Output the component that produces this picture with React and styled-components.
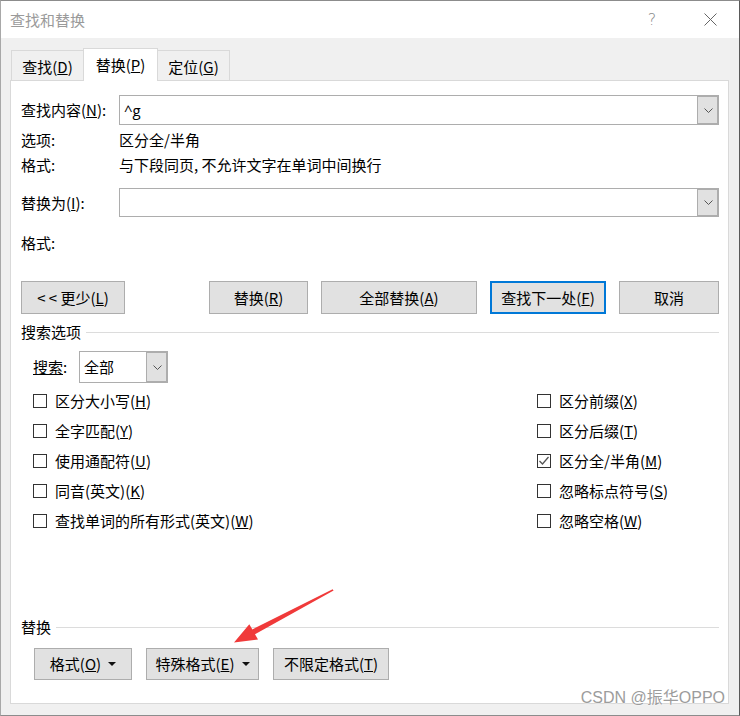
import React from "react";
import styled, { createGlobalStyle } from "styled-components";

const Global = createGlobalStyle`
  html, body { margin: 0; padding: 0; background: #fff; }
  body {
    font-family: "Noto Sans CJK SC", "Microsoft YaHei", "Noto Sans", sans-serif;
    font-size: 15px;
    color: #000;
  }
  * { box-sizing: border-box; }
`;

const Window = styled.div`
  position: relative;
  width: 740px;
  height: 716px;
  border: 1px solid #8c8c8c;
  border-left-color: #a8a8a8;
  border-right-color: #5a5a5a;
  background: #f0f0f0;
  display: flex;
  flex-direction: column;
`;

const TitleBar = styled.div`
  height: 37px;
  flex: none;
  background: #fff;
  display: flex;
  align-items: center;
`;

const Title = styled.div`
  padding-left: 9px;
  color: #9a9a9a;
  font-size: 15px;
  line-height: 20px;
`;

const TitleButton = styled.div`
  width: 58px;
  height: 37px;
  display: flex;
  align-items: center;
  justify-content: center;
  color: #8a8a8a;
  font-family: "DejaVu Sans", sans-serif;
  font-weight: 300;
  font-size: 16px;
`;

const HelpButton = styled(TitleButton)`
  margin-left: auto;
`;

const Body = styled.div`
  flex: 1;
  display: flex;
  flex-direction: column;
  padding: 10px 10px 11px 9px;
`;

const Tabs = styled.div`
  height: 32px;
  flex: none;
  display: flex;
  align-items: flex-end;
  padding-left: 1px;
`;

const Tab = styled.div`
  position: relative;
  z-index: 1;
  width: ${(p) => p.$w}px;
  height: ${(p) => (p.$active ? 33 : 30)}px;
  margin-bottom: ${(p) => (p.$active ? -1 : 0)}px;
  background: ${(p) => (p.$active ? "#fff" : "#f0f0f0")};
  border: 1px solid #d9d9d9;
  border-bottom: none;
  border-left-width: ${(p) => (p.$noLeft ? 0 : 1)}px;
  border-right-width: ${(p) => (p.$noRight ? 0 : 1)}px;
  display: flex;
  align-items: center;
  justify-content: center;
  font-size: 15px;
  line-height: 20px;
  padding-top: ${(p) => (p.$active ? 0 : 2)}px;
`;

const Panel = styled.div`
  flex: 1;
  background: #fff;
  border: 1px solid #d9d9d9;
  padding: 0 9px 23px 10px;
  display: flex;
  flex-direction: column;
`;

const FieldRow = styled.div`
  display: grid;
  grid-template-columns: 98px 1fr;
  align-items: center;
  margin-top: ${(p) => p.$mt}px;
  height: ${(p) => p.$h}px;
  font-size: 15px;
  line-height: 20px;
`;

const Combo = styled.div`
  height: 100%;
  display: flex;
  border: 1px solid #adadad;
  background: #fff;
  width: ${(p) => (p.$w ? `${p.$w}px` : "auto")};
`;

const ComboText = styled.div`
  flex: 1;
  display: flex;
  align-items: center;
  padding-left: ${(p) => p.$pl || 4}px;
  font-size: 15px;
  line-height: 20px;
  font-family: ${(p) => (p.$latin ? '"Open Sans", "Noto Sans", sans-serif' : "inherit")};
`;

const ComboArrow = styled.div`
  width: 21px;
  flex: none;
  background: #e1e1e1;
  border-left: 1px solid #adadad;
  box-shadow: inset -1px 0 0 #adadad, inset 0 1px 0 #adadad, inset 0 -1px 0 #adadad;
  display: flex;
  align-items: center;
  justify-content: center;
`;

const ButtonRow = styled.div`
  display: flex;
  align-items: stretch;
  height: ${(p) => p.$h}px;
  margin-top: ${(p) => p.$mt}px;
  padding-left: ${(p) => p.$pl || 0}px;
  gap: ${(p) => p.$gap || 0}px;
`;

const ButtonGroup = styled.div`
  display: flex;
  gap: 13px;
  margin-left: auto;
`;

const Button = styled.div`
  width: ${(p) => p.$w}px;
  background: #e1e1e1;
  border: ${(p) => (p.$primary ? "2px solid #0078d7" : "1px solid #adadad")};
  display: flex;
  align-items: center;
  justify-content: center;
  gap: 7px;
  font-size: 15px;
  line-height: 20px;
  color: #000;
`;

const SectionHeader = styled.div`
  display: flex;
  align-items: center;
  height: 20px;
  margin-top: ${(p) => (p.$auto ? "auto" : `${p.$mt}px`)};
  font-size: 15px;
  line-height: 20px;
  &::after {
    content: "";
    flex: 1;
    height: 1px;
    margin-left: 5px;
    background: #dcdcdc;
  }
`;

const SearchRow = styled.div`
  display: flex;
  align-items: center;
  height: 32px;
  margin-top: 9px;
  padding-left: 12px;
`;

const SearchLabel = styled.span`
  width: 46px;
  font-size: 15px;
  line-height: 20px;
`;

const CheckGrid = styled.div`
  display: grid;
  grid-template-columns: 504px 1fr;
  grid-auto-flow: column;
  grid-template-rows: repeat(5, 30px);
  margin-top: 3px;
  padding-left: 12px;
`;

const CheckItem = styled.label`
  display: flex;
  align-items: center;
  gap: 8px;
  font-size: 15px;
  line-height: 20px;
`;

const Box = styled.span`
  width: 14px;
  height: 14px;
  flex: none;
  border: 1px solid #333;
  background: #fff;
  display: flex;
  align-items: center;
  justify-content: center;
`;

const Watermark = styled.div`
  position: absolute;
  right: 14px;
  bottom: 8px;
  color: #9c9c9c;
  font-family: "Liberation Sans", "Noto Sans CJK SC", sans-serif;
  font-size: 16px;
  line-height: 18px;
  text-shadow: 0 0 2px #fff, 0 0 1px #fff;
`;

const Overlay = styled.svg`
  position: absolute;
  left: -1px;
  top: -1px;
  pointer-events: none;
`;

const Chevron = () => (
  <svg width="9" height="5" viewBox="0 0 9 5">
    <path d="M0.5 0.5 L4.5 4.5 L8.5 0.5" fill="none" stroke="#555" strokeWidth="1" />
  </svg>
);

const Caret = () => (
  <svg width="8" height="4" viewBox="0 0 8 4">
    <path d="M0 0 H8 L4 4 Z" fill="#111" />
  </svg>
);

const Check = () => (
  <svg width="12" height="12" viewBox="0 0 12 12">
    <path d="M1.5 6 L4.5 9 L10.5 2" fill="none" stroke="#555" strokeWidth="1.3" />
  </svg>
);

const Key = ({ pre, k, post = ")" }) => (
  <span>
    {pre}(<u>{k}</u>){post === ")" ? "" : post}
  </span>
);

const leftChecks = [
  ["区分大小写", "H"],
  ["全字匹配", "Y"],
  ["使用通配符", "U"],
  ["同音(英文)", "K"],
  ["查找单词的所有形式(英文)", "W"],
];
const rightChecks = [
  ["区分前缀", "X", false],
  ["区分后缀", "T", false],
  ["区分全/半角", "M", true],
  ["忽略标点符号", "S", false],
  ["忽略空格", "W", false],
];

export default function App() {
  return (
    <>
      <Global />
      <Window>
        <TitleBar>
          <Title>查找和替换</Title>
          <HelpButton>?</HelpButton>
          <TitleButton>
            <svg width="13" height="13" viewBox="0 0 13 13">
              <path d="M0.5 0.5 L12.5 12.5 M12.5 0.5 L0.5 12.5" stroke="#666" strokeWidth="1" />
            </svg>
          </TitleButton>
        </TitleBar>
        <Body>
          <Tabs>
            <Tab $w={72} $noRight>
              <Key pre="查找" k="D" />
            </Tab>
            <Tab $w={75} $active>
              <Key pre="替换" k="P" />
            </Tab>
            <Tab $w={72} $noLeft>
              <Key pre="定位" k="G" />
            </Tab>
          </Tabs>
          <Panel>
            <FieldRow $mt={14} $h={30}>
              <Key pre="查找内容" k="N" post=":" />
              <Combo>
                <ComboText $latin>^g</ComboText>
                <ComboArrow>
                  <Chevron />
                </ComboArrow>
              </Combo>
            </FieldRow>
            <FieldRow $mt={3} $h={24}>
              <span>选项:</span>
              <span>区分全/半角</span>
            </FieldRow>
            <FieldRow $mt={0} $h={25}>
              <span>格式:</span>
              <span>与下段同页, 不允许文字在单词中间换行</span>
            </FieldRow>
            <FieldRow $mt={11} $h={29}>
              <Key pre="替换为" k="I" post=":" />
              <Combo>
                <ComboText />
                <ComboArrow>
                  <Chevron />
                </ComboArrow>
              </Combo>
            </FieldRow>
            <FieldRow $mt={14} $h={24}>
              <span>格式:</span>
              <span />
            </FieldRow>
            <ButtonRow $mt={26} $h={33}>
              <Button $w={104}>
                <Key pre="< < 更少" k="L" />
              </Button>
              <ButtonGroup>
                <Button $w={99}>
                  <Key pre="替换" k="R" />
                </Button>
                <Button $w={156}>
                  <Key pre="全部替换" k="A" />
                </Button>
                <Button $w={116} $primary>
                  <Key pre="查找下一处" k="F" />
                </Button>
                <Button $w={100}>
                  <span>取消</span>
                </Button>
              </ButtonGroup>
            </ButtonRow>
            <SectionHeader $mt={8}>搜索选项</SectionHeader>
            <SearchRow>
              <SearchLabel>
                <u>搜索</u>:
              </SearchLabel>
              <Combo $w={89}>
                <ComboText $pl={4}>全部</ComboText>
                <ComboArrow>
                  <Chevron />
                </ComboArrow>
              </Combo>
            </SearchRow>
            <CheckGrid>
              {leftChecks.map(([a, k]) => (
                <CheckItem key={a}>
                  <Box />
                  <Key pre={a} k={k} />
                </CheckItem>
              ))}
              {rightChecks.map(([a, k, on]) => (
                <CheckItem key={a}>
                  <Box>{on && <Check />}</Box>
                  <Key pre={a} k={k} />
                </CheckItem>
              ))}
            </CheckGrid>
            <SectionHeader $auto>替换</SectionHeader>
            <ButtonRow $mt={11} $h={32} $pl={13} $gap={14}>
              <Button $w={98}>
                <Key pre="格式" k="O" />
                <Caret />
              </Button>
              <Button $w={113}>
                <Key pre="特殊格式" k="E" />
                <Caret />
              </Button>
              <Button $w={116}>
                <Key pre="不限定格式" k="T" />
              </Button>
            </ButtonRow>
          </Panel>
        </Body>
        <Overlay width="740" height="716" viewBox="0 0 740 716">
          <path
            d="M333.6 590.6 L255 634.3 L258 639.5 L234 642.5 L249.3 624.3 L252.4 629.4 L332.6 589.2 Z"
            fill="#f03a3a"
          />
        </Overlay>
        <Watermark>CSDN @振华OPPO</Watermark>
      </Window>
    </>
  );
}
